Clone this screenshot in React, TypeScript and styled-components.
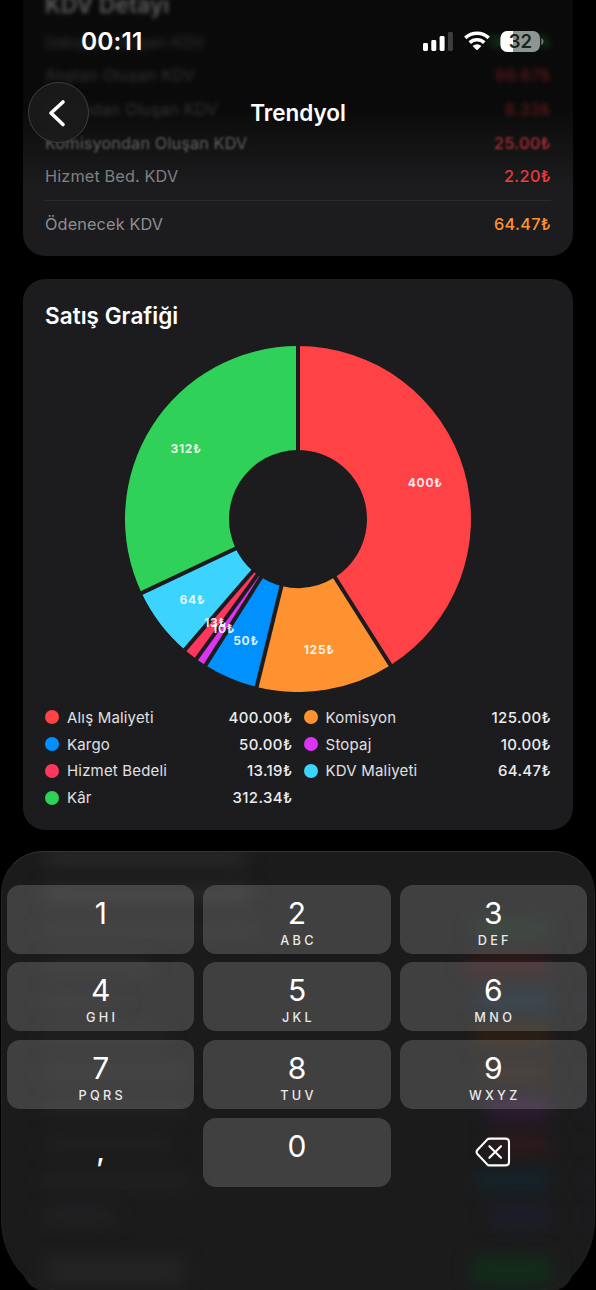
import React from "react";
import styled, { createGlobalStyle } from "styled-components";

const GlobalStyle = createGlobalStyle`
  * { box-sizing: border-box; }
  body { margin: 0; background: #000; }
`;

const Screen = styled.div`
  position: relative;
  width: 596px;
  height: 1290px;
  overflow: hidden;
  background: #000;
  color: #fff;
  font-family: Inter, "Liberation Sans", sans-serif;
`;

const Page = styled.main`
  display: flex;
  flex-direction: column;
  gap: 22.5px;
  padding: 0 23px;
`;

const Card = styled.section<{ $flushTop?: boolean }>`
  padding: 0 22px;
  background: #1c1c1e;
  border-radius: ${(p) => (p.$flushTop ? "0 0 22px 22px" : "22px")};
`;

const VatCard = styled(Card)`
  height: 256px;
`;

const ChartCard = styled(Card)`
  height: 551.5px;
  padding-top: 23px;
`;

const NextCard = styled(Card)`
  height: 438px;
`;

const CardTitle = styled.h2<{ $blur?: number }>`
  margin: 0;
  height: 28px;
  line-height: 28px;
  font-size: 22.5px;
  font-weight: 600;
  letter-spacing: 0.05px;
  filter: ${(p) => (p.$blur ? `blur(${p.$blur}px)` : "none")};
`;

const VatTitle = styled(CardTitle)`
  height: 25px;
  line-height: 9px;
  letter-spacing: 0.2px;
`;

const VatRow = styled.div<{ $blur?: number; $color: string }>`
  display: flex;
  align-items: center;
  justify-content: space-between;
  height: 33.6px;
  font-size: 16.3px;
  letter-spacing: 0.12px;
  color: #8e8e92;
  filter: ${(p) => (p.$blur ? `blur(${p.$blur}px)` : "none")};

  b {
    font-weight: 500;
    letter-spacing: 0.3px;
    color: ${(p) => p.$color};
  }
`;

const Divider = styled.hr`
  height: 1px;
  margin: 7px 0 6.5px;
  border: 0;
  background: #2b2b2d;
`;

const Chart = styled.svg`
  display: block;
  width: 346px;
  height: 346px;
  margin: 16px auto 12.5px;

  text {
    font: 700 12px Inter, sans-serif;
    letter-spacing: 0.75px;
    fill: rgba(255, 255, 255, 0.88);
    text-anchor: middle;
  }
`;

const Legend = styled.ul`
  display: grid;
  grid-template-columns: 1fr 1fr;
  column-gap: 11.2px;
  margin: 0;
  padding: 0;
  list-style: none;
`;

const LegendItem = styled.li`
  display: flex;
  align-items: center;
  height: 26.8px;
  font-size: 15px;
  letter-spacing: 0.18px;
  color: #e0e0e2;

  b {
    margin-left: auto;
    font-weight: 500;
    letter-spacing: 0.35px;
    color: #ebebec;
  }
`;

const Dot = styled.i<{ $color: string }>`
  width: 14px;
  height: 14px;
  margin-right: 8px;
  border-radius: 50%;
  background: ${(p) => p.$color};
`;

const Header = styled.header`
  position: absolute;
  inset: 0 0 auto;
  height: 200px;
  background: linear-gradient(rgba(0, 0, 0, 0.64) 0 55%, rgba(0, 0, 0, 0.34) 71%, transparent 95%);
`;

const StatusBar = styled.div`
  display: flex;
  align-items: center;
  justify-content: space-between;
  height: 81px;
  padding: 0 52px 0 81px;
`;

const Clock = styled.time`
  font-size: 24.5px;
  font-weight: 600;
  letter-spacing: 0.1px;
`;

const NavBar = styled.div`
  display: grid;
  grid-template-columns: 62px 1fr 62px;
  align-items: center;
  height: 63px;
  padding: 0 28px;
`;

const BackButton = styled.button`
  display: grid;
  place-items: center;
  width: 61px;
  height: 61px;
  padding: 0;
  border: 1.5px solid #3e3e40;
  border-radius: 50%;
  background: rgba(27, 27, 28, 0.94);
`;

const NavTitle = styled.h1`
  margin: 0;
  text-align: center;
  font-size: 22.5px;
  font-weight: 600;
`;

const Keyboard = styled.section`
  position: absolute;
  inset: 851px 1px 0;
  height: 440px;
  overflow: hidden;
  padding: 32.5px 7px 0 5px;
  border: 1px solid #222224;
  border-top: 1.5px solid #363638;
  border-radius: 42px 42px 60px 60px / 42px 42px 72px 72px;
  background: #1b1b1c;
`;

const Backdrop = styled.div`
  position: absolute;
  inset: -12px 0 0;
  display: flex;
  flex-direction: column;
`;

const BackdropRow = styled.div`
  display: flex;
  justify-content: space-between;
  align-items: center;
  height: 35.8px;
  padding-left: 43px;
`;

const Glow = styled.i<{ $w: number; $color: string; $h?: number; $mr?: number }>`
  width: ${(p) => p.$w}px;
  height: ${(p) => p.$h ?? 15}px;
  margin-right: ${(p) => p.$mr ?? 0}px;
  background: ${(p) => p.$color};
  filter: blur(9px);
`;

const TotalRow = styled(BackdropRow)`
  margin-top: 19px;
`;

const Keys = styled.div`
  position: relative;
  display: grid;
  grid-template-columns: repeat(3, 1fr);
  gap: 8.4px 8.8px;
`;

const Key = styled.button<{ $plain?: boolean }>`
  display: flex;
  flex-direction: column;
  align-items: center;
  height: 69.3px;
  padding: 10px 0 0;
  border: 0;
  border-radius: 13px;
  background: ${(p) => (p.$plain ? "transparent" : "rgba(255, 255, 255, 0.165)")};
  color: #fff;
  font-family: inherit;
`;

const Digit = styled.span`
  height: 36px;
  line-height: 36px;
  font-size: 30px;
`;

const Letters = styled.span`
  height: 18px;
  line-height: 19px;
  padding-left: 3px;
  font-size: 12.7px;
  font-weight: 500;
  letter-spacing: 3.3px;
  color: #e9e9e9;
`;

const Comma = styled(Digit)`
  padding-top: 5px;
  font-size: 29px;
  font-weight: 500;
`;

const RED = "#ff4245";
const ORANGE = "#ff9230";

const slices = [
  { name: "Alış Maliyeti", value: 400, color: RED },
  { name: "Komisyon", value: 125, color: ORANGE },
  { name: "Kargo", value: 50, color: "#0091ff" },
  { name: "Stopaj", value: 10, color: "#db34f2" },
  { name: "Hizmet Bedeli", value: 13.19, color: "#ff375f" },
  { name: "KDV Maliyeti", value: 64.47, color: "#3cd3fe" },
  { name: "Kâr", value: 312.34, color: "#30d158" },
];

const vatRows = [
  { name: "Satıştan Oluşan KDV", value: "166.67₺", color: "#30d158", blur: 3.2 },
  { name: "Alıştan Oluşan KDV", value: "66.67₺", color: RED, blur: 2.6 },
  { name: "Kargodan Oluşan KDV", value: "8.33₺", color: RED, blur: 2 },
  { name: "Komisyondan Oluşan KDV", value: "25.00₺", color: RED, blur: 0.8 },
  { name: "Hizmet Bed. KDV", value: "2.20₺", color: RED, blur: 0 },
];

const backdropRows = [
  { left: 200, leftColor: "#2b2b2c", width: 0, color: "transparent" },
  { left: 205, leftColor: "#2a2a2b", width: 0, color: "transparent" },
  { left: 215, leftColor: "#222223", width: 74, color: "#1b2a1f" },
  { left: 105, leftColor: "#232324", width: 82, color: "#35191c" },
  { left: 75, leftColor: "#202022", width: 72, color: "#172634" },
  { left: 120, leftColor: "#222223", width: 76, color: "#302114" },
  { left: 140, leftColor: "#222223", width: 70, color: "#2a1f17" },
  { left: 140, leftColor: "#222224", width: 62, color: "#331b38" },
  { left: 125, leftColor: "#222224", width: 60, color: "#31191d" },
  { left: 145, leftColor: "#222224", width: 72, color: "#15252d" },
  { left: 70, leftColor: "#232325", width: 58, color: "#1e1e2f" },
];

const keys = [
  ["1", ""], ["2", "ABC"], ["3", "DEF"],
  ["4", "GHI"], ["5", "JKL"], ["6", "MNO"],
  ["7", "PQRS"], ["8", "TUV"], ["9", "WXYZ"],
];

const total = slices.reduce((sum, s) => sum + s.value, 0);

const point = (radius: number, turn: number) => {
  const angle = turn * Math.PI * 2;
  return [radius * Math.sin(angle), -radius * Math.cos(angle)];
};

function Donut() {
  let sum = 0;
  const arcs = slices.map((s) => {
    const start = sum / total;
    sum += s.value;
    return { ...s, start, end: sum / total };
  });
  return (
    <Chart viewBox="-173 -173 346 346">
      {arcs.map(({ name, start, end, color }) => {
        const large = end - start > 0.5 ? 1 : 0;
        const [a, b, c, d] = [point(173, start), point(173, end), point(69, end), point(69, start)];
        return (
          <path
            key={name}
            fill={color}
            d={`M${a} A173 173 0 ${large} 1 ${b} L${c} A69 69 0 ${large} 0 ${d} Z`}
          />
        );
      })}
      {arcs.map(({ name, start }) => {
        const [x1, y1] = point(66, start);
        const [x2, y2] = point(175, start);
        return <line key={name} x1={x1} y1={y1} x2={x2} y2={y2} stroke="#1c1c1e" strokeWidth="4" />;
      })}
      {arcs.map(({ name, start, end, value }) => {
        const [x, y] = point(132.5, (start + end) / 2);
        return <text key={name} x={x} y={y + 4.5}>{Math.floor(value)}₺</text>;
      })}
    </Chart>
  );
}

function StatusIcons() {
  return (
    <svg width="121" height="24" viewBox="0 0 121 24">
      <g fill="#fff">
        <rect x="0" y="14" width="5" height="8" rx="1.4" />
        <rect x="8.3" y="11" width="5" height="11" rx="1.4" />
        <rect x="16.6" y="7" width="5" height="15" rx="1.4" />
        <rect x="24.9" y="3" width="5" height="19" rx="1.4" fill="#3d3d3e" />
      </g>
      <g fill="none" stroke="#fff" strokeWidth="3.6">
        <path d="M42.3 8.9 A17 17 0 0 1 65.7 8.9" />
        <path d="M46.7 13.6 A10.6 10.6 0 0 1 61.3 13.6" />
      </g>
      <path fill="#fff" d="M49.6 17 A6.3 6.3 0 0 1 58.4 17 L54.7 20.8 Q54 21.4 53.3 20.8 Z" />
      <clipPath id="battery"><rect x="77.5" y="2" width="39.5" height="21" rx="7" /></clipPath>
      <g clipPath="url(#battery)">
        <rect x="77" y="2" width="41" height="21" fill="#8f9691" />
        <rect x="77" y="2" width="13" height="21" fill="#fff" />
      </g>
      <path fill="#737875" d="M118.3 9 Q120.5 9.8 120.5 12.5 T118.3 16 Z" />
      <text x="97.3" y="19" textAnchor="middle" fontSize="18.5" fontWeight="600" fill="#17251c">32</text>
    </svg>
  );
}

export default function App() {
  return (
    <Screen>
      <GlobalStyle />
      <Page>
        <VatCard $flushTop>
          <VatTitle $blur={2.2}>KDV Detayı</VatTitle>
          {vatRows.map((row) => (
            <VatRow key={row.name} $color={row.color} $blur={row.blur}>
              <span>{row.name}</span>
              <b>{row.value}</b>
            </VatRow>
          ))}
          <Divider />
          <VatRow $color={ORANGE}>
            <span>Ödenecek KDV</span>
            <b>64.47₺</b>
          </VatRow>
        </VatCard>
        <ChartCard>
          <CardTitle>Satış Grafiği</CardTitle>
          <Donut />
          <Legend>
            {slices.map((s) => (
              <LegendItem key={s.name}>
                <Dot $color={s.color} />
                <span>{s.name}</span>
                <b>{s.value.toFixed(2)}₺</b>
              </LegendItem>
            ))}
          </Legend>
        </ChartCard>
        <NextCard />
      </Page>

      <Header>
        <StatusBar>
          <Clock>00:11</Clock>
          <StatusIcons />
        </StatusBar>
        <NavBar>
          <BackButton aria-label="Geri">
            <svg width="24" height="30" viewBox="0 0 24 30" fill="none" stroke="#fff" strokeWidth="3.6" strokeLinecap="round" strokeLinejoin="round">
              <path d="M16 4 L4 15 L16 26.5" />
            </svg>
          </BackButton>
          <NavTitle>Trendyol</NavTitle>
        </NavBar>
      </Header>

      <Keyboard>
        <Backdrop>
          {backdropRows.map((row, i) => (
            <BackdropRow key={i}>
              <Glow $w={row.left} $color={row.leftColor} />
              <BackdropRow>
                <Glow $w={row.width} $color={row.color} $mr={42} $h={19} />
                <Glow $w={3} $color={row.color} $h={19} />
              </BackdropRow>
            </BackdropRow>
          ))}
          <TotalRow>
            <Glow $w={140} $color="#242425" $h={28} />
            <Glow $w={80} $color="#122c1a" $h={30} $mr={42} />
          </TotalRow>
        </Backdrop>
        <Keys>
          {keys.map(([digit, letters]) => (
            <Key key={digit}>
              <Digit>{digit}</Digit>
              <Letters>{letters}</Letters>
            </Key>
          ))}
          <Key $plain><Comma>,</Comma></Key>
          <Key><Digit>0</Digit></Key>
          <Key $plain aria-label="Sil">
            <svg width="36" height="48" viewBox="0 0 36 48" fill="none" stroke="#fff" strokeWidth="2.1" strokeLinecap="round" strokeLinejoin="round">
              <path d="M14.6 10.6 H30.5 Q34 10.6 34 14.1 V33.9 Q34 37.4 30.5 37.4 H14.6 Q13.2 37.4 12.2 36.4 L2.4 26 Q0.8 24 2.4 22 L12.2 11.6 Q13.2 10.6 14.6 10.6 Z" />
              <path d="M14.4 18.2 L26 29.8 M26 18.2 L14.4 29.8" />
            </svg>
          </Key>
        </Keys>
      </Keyboard>
    </Screen>
  );
}
